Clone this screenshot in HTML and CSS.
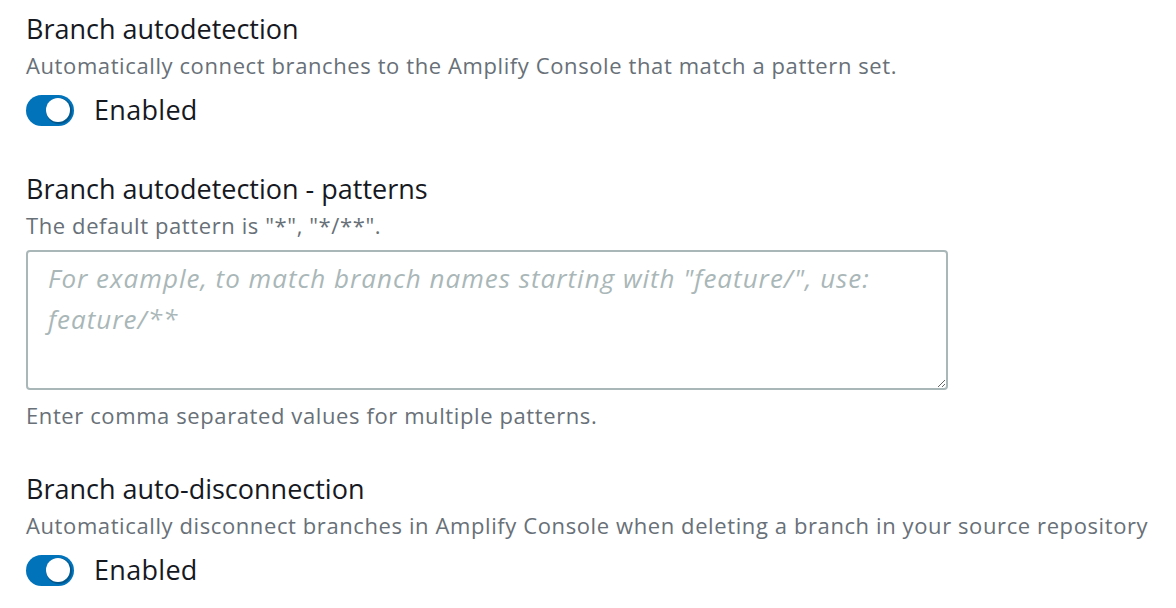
FILE: index.html
```html
<!DOCTYPE html>
<html lang="en">
<head>
<meta charset="utf-8">
<title>Branch settings</title>
<link rel="stylesheet" href="styles.css">
</head>
<body>
<main class="form">
  <section class="field">
    <h2 class="label">Branch autodetection</h2>
    <p class="desc">Automatically connect branches to the Amplify Console that match a pattern set.</p>
    <label class="toggle-row">
      <span class="toggle"><span class="knob"></span></span>
      <span class="toggle-text">Enabled</span>
    </label>
  </section>

  <section class="field field-patterns">
    <h2 class="label">Branch autodetection - patterns</h2>
    <p class="desc">The default pattern is "*", "*/**".</p>
    <textarea class="textarea" placeholder="For example, to match branch names starting with &quot;feature/&quot;, use: feature/**"></textarea>
    <p class="hint">Enter comma separated values for multiple patterns.</p>
  </section>

  <section class="field field-disconnect">
    <h2 class="label">Branch auto-disconnection</h2>
    <p class="desc">Automatically disconnect branches in Amplify Console when deleting a branch in your source repository</p>
    <label class="toggle-row">
      <span class="toggle"><span class="knob"></span></span>
      <span class="toggle-text">Enabled</span>
    </label>
  </section>
</main>
</body>
</html>
```

FILE: styles.css
```css
html, body {
  margin: 0;
  padding: 0;
  background: #ffffff;
}

body {
  font-family: "Open Sans", "Noto Sans", "Liberation Sans", sans-serif;
  color: #16191f;
  width: 1176px;
  height: 608px;
  overflow: hidden;
}

.form {
  padding: 13px 0 0 26px;
  display: flex;
  flex-direction: column;
}

.field {
  display: flex;
  flex-direction: column;
  align-items: flex-start;
}

.field-patterns {
  margin-top: 47px;
}

.field-disconnect {
  margin-top: 43px;
}

.label {
  margin: 0;
  font-size: 27px;
  line-height: 32px;
  font-weight: 500;
  color: #16191f;
}

.desc, .hint {
  margin: 0;
  font-size: 22px;
  line-height: 30px;
  letter-spacing: 0.6px;
  color: #687078;
  white-space: nowrap;
}

.desc {
  margin-top: 5px;
}

.toggle-row {
  display: flex;
  align-items: center;
  gap: 20px;
  margin-top: 14px;
  height: 32px;
}

.toggle {
  width: 48px;
  height: 31px;
  border-radius: 16px;
  background: #0073bb;
  display: flex;
  align-items: center;
  justify-content: flex-end;
  padding: 0 4px 0 0;
  box-sizing: border-box;
}

.knob {
  width: 24px;
  height: 24px;
  border-radius: 50%;
  background: #ffffff;
  box-shadow: 1px 1px 0 1px #00578d;
}

.toggle-text {
  font-size: 27px;
  line-height: 32px;
  letter-spacing: 0.3px;
  color: #16191f;
}

.textarea {
  margin-top: 10px;
  width: 922px;
  height: 140px;
  box-sizing: border-box;
  border: 2px solid #aab7b8;
  border-radius: 4px;
  padding: 6px 20px;
  font-family: "Open Sans", "Noto Sans", sans-serif;
  font-size: 26px;
  line-height: 41px;
  letter-spacing: 1px;
  color: #16191f;
  resize: vertical;
}

.textarea::placeholder {
  color: #aab7b8;
  font-style: italic;
}

.hint {
  margin-top: 10px;
}
```
